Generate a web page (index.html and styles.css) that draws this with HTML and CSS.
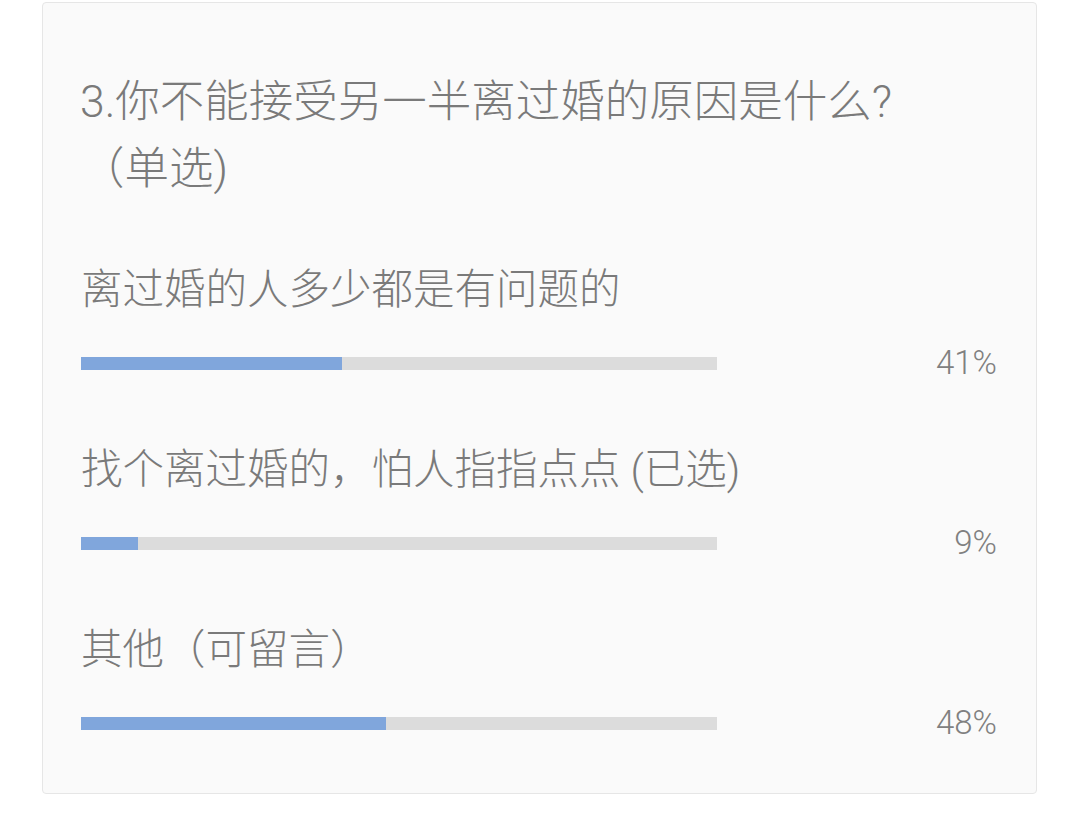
FILE: index.html
```html
<!DOCTYPE html>
<html lang="zh-CN">
<head>
  <meta charset="UTF-8" />
  <title>投票结果</title>
  <link rel="stylesheet" href="styles.css">
</head>
<body>
  <div class="card">
    <h2 class="question">3.你不能接受另一半离过婚的原因是什么?<br>（单选)</h2>

    <div class="option">
      <div class="label">离过婚的人多少都是有问题的</div>
      <div class="row">
        <div class="track"><div class="fill" style="width: 41%"></div></div>
        <span class="percent">41%</span>
      </div>
    </div>

    <div class="option">
      <div class="label">找个离过婚的，怕人指指点点 (已选)</div>
      <div class="row">
        <div class="track"><div class="fill" style="width: 9%"></div></div>
        <span class="percent">9%</span>
      </div>
    </div>

    <div class="option">
      <div class="label">其他（可留言）</div>
      <div class="row">
        <div class="track"><div class="fill" style="width: 48%"></div></div>
        <span class="percent">48%</span>
      </div>
    </div>
  </div>
</body>
</html>
```

FILE: styles.css
```css
body {
  font-family: Roboto, "Noto Sans CJK SC", sans-serif;
  font-weight: 300;
  background-color: #fff;
  color: #7a7a7a;
  margin: 0;
  padding: 2px 0 0 42px;
}

.card {
  box-sizing: border-box;
  width: 995px;
  background: #fafafa;
  border: 1px solid #e6e6e6;
  border-radius: 4px;
  padding: 66px 39px 50px 38px;
}

.question {
  font-size: 44.5px;
  font-weight: 300;
  line-height: 67px;
  margin: 0 0 0 -1px;
}

.option {
  margin-top: 57px;
}

.label {
  font-size: 41.5px;
  line-height: 60px;
  white-space: nowrap;
}

.row {
  display: flex;
  align-items: center;
  height: 40px;
  margin-top: 23px;
}

.track {
  width: 636px;
  height: 13px;
  background-color: #dcdcdc;
}

.fill {
  height: 100%;
  background-color: #80a6dc;
}

.percent {
  flex: 1;
  text-align: right;
  font-size: 33px;
  line-height: 40px;
  color: #808080;
}
```
